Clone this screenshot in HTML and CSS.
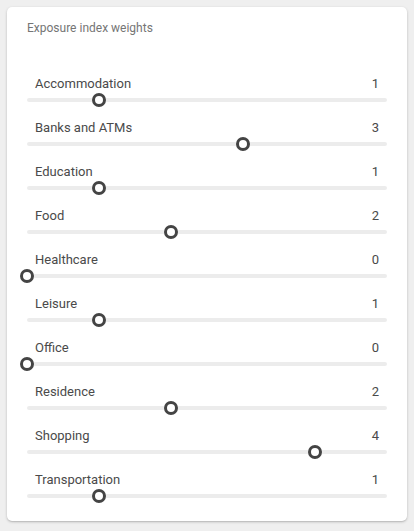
FILE: index.html
```html
<!DOCTYPE html>
<html>
<head>
<meta charset="utf-8">
<link rel="stylesheet" href="styles.css">
</head>
<body>
<div class="card">
  <div class="title">Exposure index weights</div>
  <div class="list">
    <div class="row"><div class="head"><span>Accommodation</span><span>1</span></div><div class="slider"><div class="track"></div><div class="thumb" style="left:20%"></div></div></div>
    <div class="row"><div class="head"><span>Banks and ATMs</span><span>3</span></div><div class="slider"><div class="track"></div><div class="thumb" style="left:60%"></div></div></div>
    <div class="row"><div class="head"><span>Education</span><span>1</span></div><div class="slider"><div class="track"></div><div class="thumb" style="left:20%"></div></div></div>
    <div class="row"><div class="head"><span>Food</span><span>2</span></div><div class="slider"><div class="track"></div><div class="thumb" style="left:40%"></div></div></div>
    <div class="row"><div class="head"><span>Healthcare</span><span>0</span></div><div class="slider"><div class="track"></div><div class="thumb" style="left:0%"></div></div></div>
    <div class="row"><div class="head"><span>Leisure</span><span>1</span></div><div class="slider"><div class="track"></div><div class="thumb" style="left:20%"></div></div></div>
    <div class="row"><div class="head"><span>Office</span><span>0</span></div><div class="slider"><div class="track"></div><div class="thumb" style="left:0%"></div></div></div>
    <div class="row"><div class="head"><span>Residence</span><span>2</span></div><div class="slider"><div class="track"></div><div class="thumb" style="left:40%"></div></div></div>
    <div class="row"><div class="head"><span>Shopping</span><span>4</span></div><div class="slider"><div class="track"></div><div class="thumb" style="left:80%"></div></div></div>
    <div class="row"><div class="head"><span>Transportation</span><span>1</span></div><div class="slider"><div class="track"></div><div class="thumb" style="left:20%"></div></div></div>
  </div>
</div>
</body>
</html>
```
FILE: styles.css
```css
html, body {
  margin: 0;
  padding: 0;
  background: #efefef;
  font-family: Roboto, "Liberation Sans", sans-serif;
}
body {
  padding: 7px;
}
.card {
  width: 400px;
  box-sizing: border-box;
  background: #fff;
  border-radius: 5px;
  box-shadow: 0 1px 3px rgba(0,0,0,0.2), 0 1px 1px rgba(0,0,0,0.08);
  padding: 14px 20px 18px 20px;
}
.title {
  font-size: 12px;
  line-height: 14px;
  color: #757575;
}
.list {
  margin-top: 41px;
  display: flex;
  flex-direction: column;
  gap: 13px;
}
.head {
  display: flex;
  justify-content: space-between;
  padding: 0 8px;
  font-size: 13px;
  line-height: 16px;
  color: #4a4a4a;
}
.slider {
  position: relative;
  height: 15px;
  display: flex;
  align-items: center;
}
.track {
  width: 100%;
  height: 4px;
  border-radius: 2px;
  background: #ececec;
}
.thumb {
  position: absolute;
  top: 50%;
  width: 14px;
  height: 14px;
  box-sizing: border-box;
  border: 3px solid #444;
  border-radius: 50%;
  background: #fff;
  transform: translate(-50%, -50%);
}
```
